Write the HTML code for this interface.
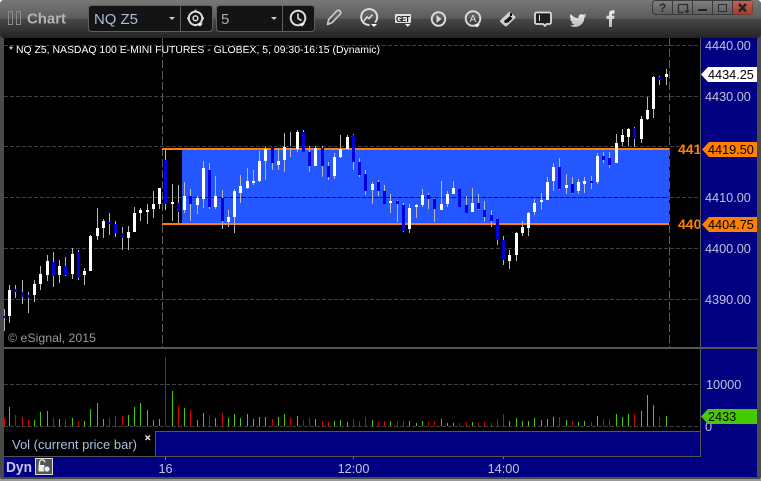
<!DOCTYPE html>
<html><head><meta charset="utf-8"><style>
html,body{margin:0;padding:0;background:#fff;width:761px;height:481px;overflow:hidden}
svg{display:block;position:absolute;left:0;top:0}
text{font-family:"Liberation Sans",sans-serif}
</style></head><body>
<svg width="761" height="481" viewBox="0 0 761 481" xmlns="http://www.w3.org/2000/svg">
<defs>
<linearGradient id="tb" x1="0" y1="0" x2="0" y2="1"><stop offset="0" stop-color="#787878"/><stop offset=".48" stop-color="#5c5c5c"/><stop offset=".5" stop-color="#484848"/><stop offset="1" stop-color="#232323"/></linearGradient>
<linearGradient id="btn" x1="0" y1="0" x2="0" y2="1"><stop offset="0" stop-color="#808080"/><stop offset="1" stop-color="#5c5c5c"/></linearGradient>
<linearGradient id="cl" x1="0" y1="0" x2="0" y2="1"><stop offset="0" stop-color="#c86050"/><stop offset="1" stop-color="#a23c2c"/></linearGradient>
<linearGradient id="ic" x1="0" y1="0" x2="0" y2="1"><stop offset="0" stop-color="#eee"/><stop offset="1" stop-color="#b8b8b8"/></linearGradient>
</defs>
<rect x="0" y="0" width="761" height="481" rx="4" fill="#4a4a4a"/>
<rect x="0" y="0" width="761" height="38" rx="4" fill="url(#tb)"/>
<rect x="0" y="479" width="761" height="2" fill="#999"/>
<!-- title -->
<g fill="none" stroke="#8a8a8a" stroke-width="1" shape-rendering="crispEdges"><rect x="8.5" y="11.5" width="4" height="13"/><rect x="16.5" y="11.5" width="4" height="13"/></g>
<text x="27" y="23.5" font-size="14.5" font-weight="bold" fill="#b4b4b4" textLength="39" lengthAdjust="spacingAndGlyphs">Chart</text>
<!-- symbol box -->
<rect x="88.5" y="5.5" width="124" height="26" rx="3" fill="#141414" stroke="#5e5e5e"/>
<rect x="180" y="6" width="1" height="25" fill="#5e5e5e"/>
<text x="94" y="24" font-size="15" fill="#a9bcd6" textLength="44" lengthAdjust="spacingAndGlyphs">NQ Z5</text>
<path d="M169 17h6l-3 3z" fill="#ccc"/>
<circle cx="195.500" cy="18.300" r="6.700" fill="none" stroke="#ddd" stroke-width="2"/>
<circle cx="195.500" cy="18.300" r="2.400" fill="none" stroke="#ddd" stroke-width="1.500"/>
<path d="M195.500 9.800v2.500M195.500 24.300v2M187 18.300h2.500M201.500 18.300h2.500" stroke="#ddd" stroke-width="1.800"/>
<path d="M197 23.500h6l-3 3z" fill="#fff"/>
<!-- interval box -->
<rect x="216.500" y="5.500" width="98" height="26" rx="3" fill="#141414" stroke="#5e5e5e"/>
<rect x="282" y="6" width="1" height="25" fill="#5e5e5e"/>
<text x="221" y="24" font-size="15" fill="#b0b0a8">5</text>
<path d="M271 17h6l-3 3z" fill="#ccc"/>
<circle cx="298" cy="18" r="7.300" fill="none" stroke="#ddd" stroke-width="2"/>
<path d="M298 13.500V18.500L301.500 20.500" fill="none" stroke="#ddd" stroke-width="1.600"/>
<path d="M299 23.500h6l-3 3z" fill="#fff"/>
<!-- toolbar icons -->
<path d="M327.500 24.500l1.200-5 8-8.500c1-1 2.400-1 3.300 0s1 2.300 0 3.300l-8 8.300z" fill="none" stroke="#c8c8c8" stroke-width="1.700" stroke-linejoin="round"/>
<path d="M375 22.500a8 8 0 1 0-5.500 2.500" fill="none" stroke="#ddd" stroke-width="2"/>
<path d="M364 21l3-4 2 1.500 3.500-4" fill="none" stroke="#ddd" stroke-width="1.600"/>
<path d="M371 24h6l-3 3z" fill="#fff"/>
<rect x="395" y="14" width="16" height="9" rx="1" fill="#e2e2e2"/>
<text x="396" y="22" font-size="8" font-weight="bold" fill="#222" font-family="Liberation Mono" textLength="14">GET</text>
<path d="M405 24h5.500l-2.700 2.700z" fill="#fff"/>
<circle cx="438.500" cy="19" r="6.700" fill="none" stroke="#d8d8d8" stroke-width="2"/>
<path d="M436.500 15v8l5-4z" fill="#d8d8d8"/>
<circle cx="473" cy="18.500" r="7.300" fill="none" stroke="#d8d8d8" stroke-width="2"/>
<text x="473" y="22" font-size="10" fill="#e0e0e0" text-anchor="middle">A</text>
<path d="M474 24.500h6l-3 3z" fill="#fff"/>
<path d="M500.500 20l8-7.500c.8-.7 1.500-.7 2.200 0l4.300 3.800c.7.700.7 1.400 0 2.100l-8 7.600c-.7.700-1.500.7-2.200 0l-4.300-3.800c-.7-.7-.7-1.500 0-2.200z" fill="#d0d0d0"/>
<path d="M505 20.500l5-4.500 2.500 2.500-5 4.500z" fill="#111"/>
<path d="M511 13v3M505.500 20v3" stroke="#111" stroke-width="2"/>
<path d="M536.500 12.500h13c.8 0 1.500.7 1.500 1.500v8.500c0 .8-.7 1.500-1.500 1.500h-3l-1.500 1.800-2-1.800h-6.500c-.8 0-1.500-.7-1.500-1.500v-8.500c0-.8.700-1.500 1.500-1.500z" fill="#1e1e1e" stroke="#dcdcdc" stroke-width="1.800"/>
<rect x="539" y="15" width="1" height="6" fill="#ddd"/>
<path d="M570.500 14c2.500 2.800 5 4 8 4.200-.6-3 2.300-5 4.700-3.500.9-.1 1.900-.5 2.700-1-.3 1-1 1.700-1.800 2.200.8 0 1.500-.2 2.200-.6-.5.900-1.200 1.500-2 2.100.2 5-3.600 9.600-9.300 9.600-1.900 0-3.700-.5-5-1.500 1.600.2 3.200-.3 4.400-1.200-1.500 0-2.600-1-3-2.200.5.100 1 .1 1.400-.1-1.500-.3-2.700-1.700-2.700-3.200.4.200 1 .4 1.400.4-1.500-1-1.900-3.100-1-4.700z" fill="url(#ic)"/>
<path d="M609 27v-8h-2.500v-3.300H609v-2c0-2.300 1.300-3.300 3.300-3.300h2.200v3.200h-1.500c-.8 0-1 .4-1 1.100v1h2.500l-.4 3.300h-2.100v8z" fill="url(#ic)"/>
<!-- window buttons -->
<rect x="652.500" y="0.500" width="100" height="14" rx="3" fill="url(#btn)" stroke="#3a3a3a"/>
<path d="M733 1h18a1.500 1.500 0 0 1 1.500 1.500v10a2 2 0 0 1-2 2H733z" fill="url(#cl)"/>
<path d="M672.500 1v14M692.500 1v14M712.500 1v14M732.500 1v14" stroke="#3a3a3a"/>
<text x="662.500" y="12" font-size="12" font-weight="bold" fill="#2c2c2c" text-anchor="middle">?</text>
<path d="M678.500 4.500h9v6M678.500 4.500v8h5" fill="none" stroke="#2c2c2c" stroke-width="1.300"/>
<path d="M684 10.500h6l-3 3z" fill="#2c2c2c"/>
<rect x="698" y="9" width="9" height="2" fill="#222"/>
<rect x="718.500" y="4.500" width="8" height="7" fill="none" stroke="#2c2c2c"/>
<path d="M739 4l7 7.500M746 4l-7 7.500" stroke="#222" stroke-width="2.400"/>

<!-- panels -->
<rect x="4" y="38" width="753" height="439" fill="#000080"/>
<rect x="4" y="38" width="696" height="393" fill="#000"/>
<rect x="4" y="431" width="151" height="25" fill="#000"/>
<rect x="4" y="347" width="753" height="2" fill="#555"/>
<rect x="155" y="431" width="546" height="1" fill="#555"/>
<rect x="155" y="431" width="1" height="25" fill="#555"/>
<rect x="4" y="456" width="697" height="1" fill="#555"/>
<rect x="700" y="38" width="1" height="419" fill="#555"/>
<rect x="165" y="457" width="1" height="3" fill="#777"/><rect x="353" y="457" width="1" height="2" fill="#777"/><rect x="503" y="457" width="1" height="2" fill="#777"/>

<!-- band -->
<rect x="182" y="150" width="487" height="73" fill="#2457ff"/>
<!-- grid -->
<g stroke="#404040" stroke-width="1" stroke-dasharray="4 2" shape-rendering="crispEdges" fill="none">
<path d="M4 45.500H700M4 96.500H700M4 146.500H700M4 197.500H700M4 248.500H700M4 299.500H700M4 384.500H700M4 426.500H700"/>
</g>
<path d="M182 197.500H669" stroke="#0a1a50" stroke-dasharray="4 2" shape-rendering="crispEdges"/>
<path d="M162.500 38V347M669.500 38V347" stroke="#5c5c5c" stroke-dasharray="8 3" shape-rendering="crispEdges" fill="none"/>
<!-- orange lines -->
<g fill="#ff7f00"><rect x="162" y="148" width="507" height="2"/><rect x="162" y="223" width="507" height="2"/></g>

<!-- candles crop A -->
<g fill="none" shape-rendering="crispEdges" transform="translate(.167 120) scale(.333334)">
<path stroke="#b8b8b8" stroke-width="3" d="M13 567V633M28 495V609M46 495V534M67 480V552M85 516V579M103 480V546M121 438V510M142 405V483M160 396V501M178 420V489M196 411V468M217 384V477M235 390V480M253 444V495M271 345V453M292 264V360M310 297V354M328 279V345M346 303V351M367 321V390M385 318V390M403 261V336M421 264V303M442 252V312M460 213V294M478 204V267M496 90V270M517 192V303M535 195V309M553 186V279M571 207V303M592 228V282M610 123V264M628 129V267M646 168V267M667 210V327M685 270V321M703 207V339M721 165V249M742 144V207"/>
<path stroke="#fff" stroke-width="9" d="M28 510V588M103 492V525M121 462V492M142 423V465M178 438V465M217 402V462M253 453V465M271 348V453M292 324V348M310 303V324M385 336V354M403 279V336M421 270V279M442 270V276M460 252V267M478 204V252M517 246V252M553 228V270M592 234V255M610 144V237M646 228V261M685 291V306M703 213V291M721 198V219M742 183V204"/>
<path stroke="#0000dc" stroke-width="9" d="M13 588V594M46 507V516M67 516V531M85 525V534M160 426V468M196 438V465M235 396V474M328 306V312M346 312V339M367 339V354M496 120V252M535 249V276M571 228V252M628 150V261M667 234V303"/>
</g>
<!-- candles crop B -->
<g fill="none" shape-rendering="crispEdges" transform="translate(250.167 120) scale(.333334)">
<path stroke="#b8b8b8" stroke-width="3" d="M10 150V195M28 93V186M46 81V180M67 81V150M85 84V150M103 39V156M121 36V111M142 30V96M160 30V96M178 78V156M196 78V138M217 78V171M235 126V180M253 99V177M271 45V114M292 45V87M310 42V150M328 114V171M346 150V225M367 186V252M385 180V228M403 195V252M421 222V279M442 240V306M460 249V336M478 252V339M499 252V294M517 207V261M535 219V267M553 234V306M574 183V270M592 213V261M610 183V222M628 207V261M649 228V279M667 204V276M685 222V270M703 243V306M724 270V321M742 297V375M760 348V435M778 390V447M799 336V423"/>
<path stroke="#fff" stroke-width="9" d="M10 183V189M28 123V183M46 87V123M85 123V135M103 81V120M142 36V87M196 84V138M253 111V168M271 87V111M292 51V87M367 192V210M421 243V249M478 264V327M499 255V261M517 225V255M574 252V270M592 222V252M610 204V222M667 249V276M778 405V423M799 339V405"/>
<path stroke="#0000dc" stroke-width="9" d="M67 81V129M121 78V84M160 36V96M178 96V138M217 84V138M235 138V171M310 45V126M328 126V165M346 162V213M385 186V213M403 213V252M442 243V252M460 255V333M535 225V237M553 237V267M628 207V261M649 255V279M685 249V267M703 270V291M724 285V303M742 297V360M760 360V420"/>
</g>
<!-- candles crop C -->
<g fill="none" shape-rendering="crispEdges" transform="translate(520.167 50) scale(.333334)">
<path stroke="#b8b8b8" stroke-width="3" d="M7 513V558M25 486V558M43 447V495M64 429V480M82 381V450M100 339V423M118 324V420M139 372V432M157 381V432M175 387V432M193 381V429M214 378V417M232 309V402M250 306V339M268 306V354M289 252V339M307 237V288M325 234V288M343 231V291M364 198V279M382 141V210M400 78V204M418 78V105M439 57V105"/>
<path stroke="#fff" stroke-width="9" d="M7 531V549M25 489V534M43 459V486M64 450V456M82 396V450M100 351V393M139 405V414M175 396V423M193 393V402M232 318V396M289 279V339M307 255V276M325 237V261M364 207V267M382 180V207M400 81V177M439 72V81"/>
<path stroke="#0000dc" stroke-width="9" d="M118 351V417M157 402V429M214 393V399M250 318V330M268 324V345M343 234V267M418 81V90"/>
</g>

<!-- volume crop A -->
<g fill="none" stroke-width="3" shape-rendering="crispEdges" transform="translate(.167 340) scale(.333334)">
<path stroke="#44cc00" d="M28 201V258M103 240V258M121 216V258M142 213V258M178 237V258M217 234V258M253 243V258M271 207V258M292 189V258M310 237V258M385 225V258M403 201V258M421 189V258M442 210V258M460 240V258M478 237V258M517 153V258M553 204V258M592 240V258M610 219V258M646 234V258M685 234V258M703 222V258M721 234V258M742 222V258"/>
<path stroke="#dc0000" d="M13 234V258M46 225V258M67 231V258M85 240V258M160 234V258M196 237V258M235 243V258M328 234V258M346 228V258M367 228V258M496 51V258M535 198V258M571 210V258M628 225V258M667 219V258"/>
</g>
<!-- volume crop B -->
<g fill="none" stroke-width="3" shape-rendering="crispEdges" transform="translate(250.167 350) scale(.333334)">
<path stroke="#44cc00" d="M10 207V228M28 201V228M46 201V228M85 201V228M103 192V228M142 198V228M196 207V228M253 213V228M271 210V228M292 216V228M367 210V228M421 213V228M478 213V228M499 219V228M517 213V228M574 207V228M592 219V228M610 219V228M667 216V228M778 213V228M799 204V228M817 213V228M835 213V228M853 204V228M874 210V228M892 207V228M910 201V228M949 210V228M985 216V228M1003 213V228M1042 198V228"/>
<path stroke="#dc0000" d="M67 207V228M121 204V228M160 210V228M178 204V228M217 213V228M235 216V228M310 207V228M328 213V228M346 201V228M385 216V228M403 213V228M442 213V228M460 213V228M535 216V228M553 213V228M628 219V228M649 216V228M685 219V228M703 216V228M724 219V228M742 207V228M760 192V228M928 201V228M967 213V228M1024 216V228"/>
</g>
<!-- volume crop C -->
<g fill="none" stroke-width="3" shape-rendering="crispEdges" transform="translate(600.167 340) scale(.333334)">
<path stroke="#44cc00" d="M49 222V258M67 231V258M85 222V258M124 213V258M142 165V258M160 195V258M199 228V258"/>
<path stroke="#dc0000" d="M10 237V258M28 237V258M103 222V258M178 231V258"/>
</g>

<!-- chart text -->
<text x="9" y="53" font-size="10" fill="#fff" textLength="371" lengthAdjust="spacingAndGlyphs">* NQ Z5, NASDAQ 100 E-MINI FUTURES - GLOBEX, 5, 09:30-16:15 (Dynamic)</text>
<text x="8" y="342" font-size="12" fill="#9a9a9a" textLength="88" lengthAdjust="spacingAndGlyphs">© eSignal, 2015</text>

<!-- axis text -->
<g font-size="12.700" fill="#c2c2dc">
<text x="705" y="50">4440.00</text>
<text x="705" y="101">4430.00</text>
<text x="705" y="202">4410.00</text>
<text x="705" y="253">4400.00</text>
<text x="705" y="304">4390.00</text>
<text x="706" y="389">10000</text>
<text x="705" y="431">0</text>
<text x="165.500" y="473" text-anchor="middle">16</text>
<text x="353.500" y="473" text-anchor="middle">12:00</text>
<text x="503.500" y="473" text-anchor="middle">14:00</text>
</g>
<!-- level labels -->
<g font-size="14" font-weight="bold" fill="#ff7f00">
<text x="678" y="154">441</text>
<text x="678" y="229">440</text>
</g>
<rect x="700" y="140" width="1" height="95" fill="#555"/>
<path d="M702 149.500l7-7.500h48v15h-48z" fill="#ff7f00"/>
<path d="M702 224.500l7-7.500h48v15h-48z" fill="#ff7f00"/>
<path d="M701 74.500l7-7.500h49v15h-49z" fill="#fff"/>
<path d="M701 416.500l7-7.500h49v15h-49z" fill="#44cc00"/>
<g font-size="12.700" fill="#000">
<text x="708" y="79">4434.25</text>
<text x="708" y="154">4419.50</text>
<text x="708" y="229">4404.75</text>
<text x="708" y="421">2433</text>
</g>

<!-- legend -->
<text x="12" y="449" font-size="12.500" fill="#a4c0e4" textLength="125" lengthAdjust="spacingAndGlyphs">Vol (current price bar)</text>
<path d="M145.500 435.500l4.500 4.500M150 435.500l-4.500 4.500" stroke="#ddd" stroke-width="1.500"/>
<!-- Dyn -->
<text x="6" y="472" font-size="14.500" font-weight="bold" fill="#c8c8f0" textLength="26" lengthAdjust="spacingAndGlyphs">Dyn</text>
<rect x="35.500" y="458.500" width="17" height="16" fill="#555" stroke="#ddd"/>
<path d="M39.500 465v-2.500a2.700 2.700 0 0 1 5.400 0" fill="none" stroke="#eee" stroke-width="1.300"/>
<rect x="38.500" y="465" width="6" height="6.500" fill="#eee"/>
<circle cx="47" cy="469" r="3" fill="#eee" stroke="#555" stroke-width=".8"/>
</svg>
</body></html>
